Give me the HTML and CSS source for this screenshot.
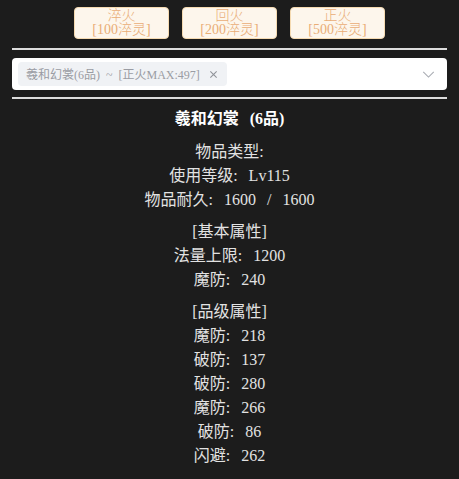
FILE: index.html
```html
<!DOCTYPE html>
<html lang="zh-CN">
<head>
<meta charset="utf-8">
<title>装备</title>
<link rel="stylesheet" href="styles.css">
</head>
<body>
<div class="page">
  <div class="actions">
    <button class="btn">淬火<br>[100淬灵]</button>
    <button class="btn">回火<br>[200淬灵]</button>
    <button class="btn">正火<br>[500淬灵]</button>
  </div>
  <div class="rule"></div>
  <div class="select">
    <span class="tag">
      <span class="tag-text">羲和幻裳(6品) ~ [正火MAX:497]</span>
      <svg class="tag-close" viewBox="0 0 10 10" width="9" height="9"><path d="M1.5 1.5 L8.5 8.5 M8.5 1.5 L1.5 8.5" stroke="#909399" stroke-width="1.2" fill="none"/></svg>
    </span>
    <svg class="chevron" viewBox="0 0 14 8" width="13" height="7"><path d="M1 1 L7 7 L13 1" stroke="#a8abb2" stroke-width="1.2" fill="none"/></svg>
  </div>
  <div class="rule"></div>
  <div class="detail">
    <div class="title">羲和幻裳 (6品)</div>
    <div class="group">
      <div>物品类型:</div>
      <div>使用等级: Lv115</div>
      <div>物品耐久: 1600 / 1600</div>
    </div>
    <div class="group">
      <div>[基本属性]</div>
      <div>法量上限: 1200</div>
      <div>魔防: 240</div>
    </div>
    <div class="group">
      <div>[品级属性]</div>
      <div>魔防: 218</div>
      <div>破防: 137</div>
      <div>破防: 280</div>
      <div>魔防: 266</div>
      <div>破防: 86</div>
      <div>闪避: 262</div>
    </div>
  </div>
</div>
</body>
</html>
```

FILE: styles.css
```css
html, body {
  margin: 0;
  padding: 0;
  background: #1c1c1c;
}
.page {
  padding: 7px 12px 0;
  font-family: "Liberation Serif", "Noto Sans CJK SC", serif;
}
.actions {
  display: flex;
  justify-content: center;
  gap: 13px;
}
.btn {
  width: 95px;
  height: 32px;
  padding: 0;
  margin: 0;
  background: #fdf6ec;
  border: 1px solid #f5dab1;
  border-radius: 4px;
  color: #e9ad76;
  font-family: "Liberation Serif", "Noto Sans CJK SC", serif;
  font-size: 14px;
  line-height: 14px;
  font-weight: 300;
}
.rule {
  height: 2px;
  background: #dcdcdc;
  margin-top: 9px;
}
.select {
  margin-top: 8px;
  height: 32px;
  background: #fff;
  border-radius: 4px;
  display: flex;
  align-items: center;
  padding: 0 12px 0 6px;
  box-sizing: border-box;
}
.select + .rule {
  margin-top: 7px;
}
.tag {
  display: flex;
  align-items: center;
  height: 24px;
  background: #f0f2f5;
  border-radius: 4px;
  padding: 0 9px 0 8px;
  color: #9a9ca3;
  font-size: 12px;
  width: 209px;
  box-sizing: border-box;
}
.tag-text {
  flex: 1;
  white-space: nowrap;
  word-spacing: 3px;
}
.tag-close {
  display: block;
}
.chevron {
  display: block;
  margin-left: auto;
}
.detail {
  text-align: center;
  color: #e2e2e2;
  font-size: 16px;
  line-height: 24px;
  padding-top: 8px;
  word-spacing: 7px;
}
.title {
  color: #fff;
  font-weight: bold;
  margin-bottom: 9px;
}
.group + .group {
  margin-top: 8px;
}
```
